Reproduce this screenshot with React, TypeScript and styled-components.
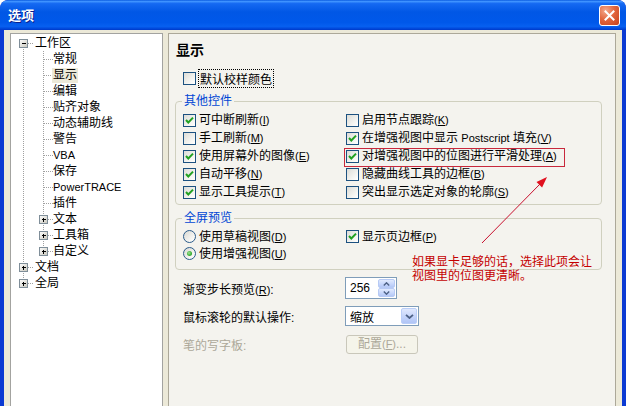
import React from 'react';
import styled, { createGlobalStyle } from 'styled-components';

const Global = createGlobalStyle`
  html, body { margin: 0; padding: 0; background: #fff; }
  body {
    font-family: "Liberation Sans", "Noto Sans CJK SC", sans-serif;
    font-size: 12px;
    color: #000;
  }
  * { box-sizing: border-box; }
`;

const Window = styled.div`
  width: 626px;
  height: 406px;
  overflow: hidden;
  display: flex;
  flex-direction: column;
  background: #0B3AD3;
  border-radius: 8px 8px 0 0;
`;

const TitleBar = styled.div`
  flex: none;
  height: 30px;
  display: flex;
  align-items: center;
  justify-content: space-between;
  padding: 0 6px 0 8px;
  border-radius: 8px 8px 0 0;
  background: linear-gradient(
    to bottom,
    #0A5BE0 0%,
    #3E92FF 5%,
    #1569F2 12%,
    #0157E5 40%,
    #0058EA 75%,
    #0760F0 88%,
    #0046D9 96%,
    #0038C8 100%
  );
`;

const Title = styled.div`
  color: #fff;
  font-family: "Noto Sans CJK SC", sans-serif;
  font-weight: bold;
  font-size: 13px;
  line-height: 16px;
  text-shadow: 1px 1px 0 #0A1E8C;
`;

const CloseBtn = styled.div`
  width: 21px;
  height: 21px;
  border: 1px solid #fff;
  border-radius: 3px;
  background: radial-gradient(circle at 30% 25%, #F4A98C 0%, #E2673F 45%, #C7411A 100%);
  display: flex;
  align-items: center;
  justify-content: center;
`;

const Body = styled.div`
  flex: 1;
  min-height: 0;
  margin: 0 4px;
  background: #ECE9D8;
  display: flex;
  gap: 5px;
  padding: 3px 6px 0 6px;
`;

/* ---------- Tree ---------- */

const TreePanel = styled.div`
  width: 153px;
  flex: none;
  background: #fff;
  border: 1px solid #A3A3A0;
  border-bottom: none;
  padding: 1px 0 0 2px;
`;

const TreeRowBox = styled.div`
  display: flex;
  align-items: center;
  height: 16px;
`;

const TreeCell = styled.svg`
  flex: none;
  display: block;
`;

const TreeLabel = styled.span<{ $selected?: boolean; $child?: boolean }>`
  margin-left: ${(p) => (p.$child ? '-1px' : '1px')};
  padding: 0 1px;
  line-height: 15px;
  white-space: nowrap;
  font-size: 12px;
  background: ${(p) => (p.$selected ? '#ECE9D8' : 'transparent')};
`;

const Latin = styled.span`
  font-family: "Liberation Sans", sans-serif;
  font-size: 11px;
`;

type Exp = 'plus' | 'minus' | undefined;

const DOT = '#A0A0A0';

function Guide() {
  return (
    <TreeCell width={20} height={16} shapeRendering="crispEdges">
      <line x1={10.5} y1={0} x2={10.5} y2={16} stroke={DOT} strokeDasharray="1 1" />
    </TreeCell>
  );
}

function NodeCell({ up, down, exp }: { up: boolean; down: boolean; exp: Exp }) {
  return (
    <TreeCell width={20} height={16} shapeRendering="crispEdges">
      {up && <line x1={10.5} y1={0} x2={10.5} y2={8} stroke={DOT} strokeDasharray="1 1" />}
      {down && <line x1={10.5} y1={8} x2={10.5} y2={16} stroke={DOT} strokeDasharray="1 1" />}
      <line x1={11} y1={8.5} x2={20} y2={8.5} stroke={DOT} strokeDasharray="1 1" />
      {exp && (
        <>
          <defs>
            <linearGradient id="expg" x1="0" y1="0" x2="1" y2="1">
              <stop offset="0" stopColor="#FFFFFF" />
              <stop offset="1" stopColor="#C8C6BB" />
            </linearGradient>
          </defs>
          <rect x={6.5} y={4.5} width={8} height={8} fill="url(#expg)" stroke="#7F8E99" />
          <line x1={8.5} y1={8.5} x2={13} y2={8.5} stroke="#000" />
          {exp === 'plus' && <line x1={10.5} y1={6.5} x2={10.5} y2={11} stroke="#000" />}
        </>
      )}
    </TreeCell>
  );
}

type TreeItem = {
  label: React.ReactNode;
  level: number;
  exp?: Exp;
  up: boolean;
  down: boolean;
  selected?: boolean;
};

const childNames: { l: React.ReactNode; exp?: Exp; sel?: boolean }[] = [
  { l: '常规' },
  { l: '显示', sel: true },
  { l: '编辑' },
  { l: '贴齐对象' },
  { l: '动态辅助线' },
  { l: '警告' },
  { l: <Latin>VBA</Latin> },
  { l: '保存' },
  { l: <Latin>PowerTRACE</Latin> },
  { l: '插件' },
  { l: '文本', exp: 'plus' },
  { l: '工具箱', exp: 'plus' },
  { l: '自定义', exp: 'plus' },
];

const treeItems: TreeItem[] = [
  { label: '工作区', level: 0, exp: 'minus', up: false, down: true },
  ...childNames.map((c, i) => ({
    label: c.l,
    level: 1,
    exp: c.exp,
    up: true,
    down: i < childNames.length - 1,
    selected: c.sel,
  })),
  { label: '文档', level: 0, exp: 'plus', up: true, down: true },
  { label: '全局', level: 0, exp: 'plus', up: true, down: false },
];

function TreeRow({ item }: { item: TreeItem }) {
  return (
    <TreeRowBox>
      {item.level === 1 && <Guide />}
      <NodeCell up={item.up} down={item.down} exp={item.exp} />
      <TreeLabel $selected={item.selected} $child={item.level > 0}>
        {item.label}
      </TreeLabel>
    </TreeRowBox>
  );
}

/* ---------- Right panel ---------- */

const Panel = styled.div`
  flex: 1;
  position: relative;
  background: #F4F3EE;
  border: 1px solid #ACA899;
  border-bottom: none;
  padding: 7px 13px 0 6px;
  display: flex;
  flex-direction: column;
`;

const Heading = styled.div`
  margin-left: 1px;
  font-family: "Noto Sans CJK SC", sans-serif;
  font-weight: bold;
  font-size: 14px;
  line-height: 16px;
`;

const TopCheck = styled.div`
  margin: 13px 0 0 8px;
  height: 16px;
  display: flex;
  align-items: center;
`;

const Group = styled.fieldset<{ $gap: number }>`
  margin: ${(p) => p.$gap}px 0 0 0;
  padding: 0;
  min-width: 0;
  border: 1px solid #D0D0BF;
  border-radius: 4px;
`;

const Legend = styled.legend`
  margin-left: 6px;
  padding: 0 2px;
  color: #0046D5;
  font-size: 12px;
  line-height: 14px;
`;

const GroupGrid = styled.div<{ $rows: number; $rowH: number; $pt: number; $pb: number }>`
  display: grid;
  grid-template-columns: 163px 1fr;
  grid-template-rows: repeat(${(p) => p.$rows}, ${(p) => p.$rowH}px);
  grid-auto-flow: column;
  padding: ${(p) => p.$pt}px 0 ${(p) => p.$pb}px 7px;
`;

const OptRow = styled.label`
  display: flex;
  align-items: center;
  white-space: nowrap;
  line-height: 14px;
`;

const Box = styled.span`
  flex: none;
  width: 13px;
  height: 13px;
  border: 1px solid #1C5180;
  background: linear-gradient(135deg, #DCDCD7 0%, #F6F6F3 70%, #FFFFFF 100%);
  margin-right: 3px;
  display: flex;
  align-items: center;
  justify-content: center;
`;

const RadioCircle = styled.span`
  flex: none;
  width: 13px;
  height: 13px;
  border-radius: 50%;
  border: 1px solid #2A5B8A;
  background: linear-gradient(135deg, #D8D8D2 0%, #F6F6F3 70%, #FFFFFF 100%);
  margin-right: 3px;
  display: flex;
  align-items: center;
  justify-content: center;
`;

const RadioDot = styled.span`
  width: 5px;
  height: 5px;
  border-radius: 50%;
  background: radial-gradient(circle at 40% 40%, #A4E29A 0%, #3FB33A 55%, #1E8C1E 100%);
`;

const Focus = styled.span`
  outline: 1px dotted #000;
  outline-offset: 0;
  padding: 0 1px;
`;

const U = styled.span`
  text-decoration: underline;
  text-underline-offset: 1px;
`;

function Mn({ k }: { k: string }) {
  return (
    <Latin>
      (<U>{k}</U>)
    </Latin>
  );
}

function Check({ on }: { on?: boolean }) {
  return (
    <Box>
      {on && (
        <svg width="9" height="9" viewBox="0 0 9 9">
          <path d="M1 4 L3.3 6.5 L8 1.6" fill="none" stroke="#21A121" strokeWidth="2" />
        </svg>
      )}
    </Box>
  );
}

function CheckOpt({ on, children }: { on?: boolean; children: React.ReactNode }) {
  return (
    <OptRow>
      <Check on={on} />
      <span>{children}</span>
    </OptRow>
  );
}

function RadioOpt({ on, children }: { on?: boolean; children: React.ReactNode }) {
  return (
    <OptRow>
      <RadioCircle>{on && <RadioDot />}</RadioCircle>
      <span>{children}</span>
    </OptRow>
  );
}

const FieldRow = styled.div<{ $first?: boolean }>`
  display: grid;
  grid-template-columns: 163px auto;
  align-items: center;
  justify-content: start;
  height: 28px;
  padding-left: 8px;
  margin-top: ${(p) => (p.$first ? '4px' : '0')};
`;

const FieldLabel = styled.span<{ $disabled?: boolean }>`
  color: ${(p) => (p.$disabled ? '#ACA899' : '#000')};
  white-space: nowrap;
`;

const Spin = styled.div`
  width: 52px;
  height: 22px;
  border: 1px solid #7F9DB9;
  background: #fff;
  display: flex;
  align-items: stretch;
  padding: 1px;
  margin-left: -1px;
`;

const InputText = styled.span`
  flex: 1;
  display: flex;
  align-items: center;
  padding-left: 3px;
  font-size: 12px;
`;

const SpinBtns = styled.div`
  width: 17px;
  display: flex;
  flex-direction: column;
`;

const SpinHalf = styled.div`
  flex: 1;
  border: 1px solid #B7CAF5;
  border-radius: 2px;
  background: linear-gradient(to bottom, #E1EAFE 0%, #C6D6FB 60%, #B4C8F6 100%);
  display: flex;
  align-items: center;
  justify-content: center;
`;

const Combo = styled.div`
  width: 74px;
  height: 20px;
  border: 1px solid #7F9DB9;
  background: #fff;
  display: flex;
  align-items: stretch;
  padding: 1px;
  margin-left: -1px;
`;

const ComboBtn = styled.div`
  width: 16px;
  border: 1px solid #BACEF8;
  border-radius: 2px;
  background: linear-gradient(to bottom, #E0E8FD 0%, #C4D4FA 55%, #B1C5F6 100%);
  display: flex;
  align-items: center;
  justify-content: center;
`;

const DisabledBtn = styled.div`
  width: 72px;
  height: 19px;
  border: 1px solid #C9C7BA;
  border-radius: 3px;
  background: #F5F4EA;
  color: #ACA899;
  display: flex;
  align-items: center;
  justify-content: center;
  line-height: 14px;
`;

/* ---------- Annotation overlay ---------- */

const HighlightRect = styled.div`
  position: absolute;
  left: 175px;
  top: 114px;
  width: 221px;
  height: 19px;
  border: 1px solid #C8283C;
  pointer-events: none;
`;

const ArrowLayer = styled.svg`
  position: absolute;
  left: 0;
  top: 0;
  pointer-events: none;
`;

const Note = styled.div`
  position: absolute;
  left: 243px;
  top: 221px;
  color: #C40000;
  font-size: 12px;
  line-height: 14px;
  white-space: nowrap;
`;

const NoteLine = styled.div`
  height: 14px;
`;

function Chevron({ w = 9, h = 5 }: { w?: number; h?: number }) {
  return (
    <svg width={w} height={h} viewBox="0 0 9 5">
      <path d="M1 0.8 L4.5 4 L8 0.8" fill="none" stroke="#4D6185" strokeWidth="1.8" />
    </svg>
  );
}

export default function App() {
  return (
    <>
      <Global />
      <Window>
        <TitleBar>
          <Title>选项</Title>
          <CloseBtn>
            <svg width="11" height="11" viewBox="0 0 11 11">
              <path d="M1.5 1.5 L9.5 9.5 M9.5 1.5 L1.5 9.5" stroke="#fff" strokeWidth="2" strokeLinecap="square" />
            </svg>
          </CloseBtn>
        </TitleBar>
        <Body>
          <TreePanel>
            {treeItems.map((it, i) => (
              <TreeRow key={i} item={it} />
            ))}
          </TreePanel>
          <Panel>
            <Heading>显示</Heading>
            <TopCheck>
              <Check />
              <Focus>默认校样颜色</Focus>
            </TopCheck>

            <Group $gap={8}>
              <Legend>其他控件</Legend>
              <GroupGrid $rows={5} $rowH={18} $pt={3} $pb={3}>
                <CheckOpt on>可中断刷新<Mn k="I" /></CheckOpt>
                <CheckOpt>手工刷新<Mn k="M" /></CheckOpt>
                <CheckOpt on>使用屏幕外的图像<Mn k="E" /></CheckOpt>
                <CheckOpt on>自动平移<Mn k="N" /></CheckOpt>
                <CheckOpt on>显示工具提示<Mn k="T" /></CheckOpt>
                <CheckOpt>启用节点跟踪<Mn k="K" /></CheckOpt>
                <CheckOpt on>在增强视图中显示 <Latin>Postscript</Latin> 填充<Mn k="V" /></CheckOpt>
                <CheckOpt on>对增强视图中的位图进行平滑处理<Mn k="A" /></CheckOpt>
                <CheckOpt>隐藏曲线工具的边框<Mn k="B" /></CheckOpt>
                <CheckOpt>突出显示选定对象的轮廓<Mn k="S" /></CheckOpt>
              </GroupGrid>
            </Group>

            <Group $gap={6}>
              <Legend>全屏预览</Legend>
              <GroupGrid $rows={2} $rowH={17} $pt={3} $pb={7}>
                <RadioOpt>使用草稿视图<Mn k="D" /></RadioOpt>
                <RadioOpt on>使用增强视图<Mn k="U" /></RadioOpt>
                <CheckOpt on>显示页边框<Mn k="P" /></CheckOpt>
              </GroupGrid>
            </Group>

            <FieldRow $first>
              <FieldLabel>渐变步长预览<Mn k="R" />:</FieldLabel>
              <Spin>
                <InputText>256</InputText>
                <SpinBtns>
                  <SpinHalf>
                    <svg width="7" height="4" viewBox="0 0 7 4">
                      <path d="M0.8 3.5 L3.5 0.8 L6.2 3.5" fill="none" stroke="#4D6185" strokeWidth="1.4" />
                    </svg>
                  </SpinHalf>
                  <SpinHalf>
                    <svg width="7" height="4" viewBox="0 0 7 4">
                      <path d="M0.8 0.5 L3.5 3.2 L6.2 0.5" fill="none" stroke="#4D6185" strokeWidth="1.4" />
                    </svg>
                  </SpinHalf>
                </SpinBtns>
              </Spin>
            </FieldRow>
            <FieldRow>
              <FieldLabel>鼠标滚轮的默认操作:</FieldLabel>
              <Combo>
                <InputText>缩放</InputText>
                <ComboBtn>
                  <Chevron />
                </ComboBtn>
              </Combo>
            </FieldRow>
            <FieldRow>
              <FieldLabel $disabled>笔的写字板:</FieldLabel>
              <DisabledBtn>
                配置<Mn k="F" />...
              </DisabledBtn>
            </FieldRow>

            <HighlightRect />
            <ArrowLayer width={447} height={372}>
              <line x1={313} y1={209} x2={371} y2={150} stroke="#C8102E" strokeWidth="1" />
              <polygon points="378,143 373.1,153.6 367.5,148" fill="#E0101E" />
            </ArrowLayer>
            <Note>
              <NoteLine>如果显卡足够的话，选择此项会让</NoteLine>
              <NoteLine>视图里的位图更清晰。</NoteLine>
            </Note>
          </Panel>
        </Body>
      </Window>
    </>
  );
}
